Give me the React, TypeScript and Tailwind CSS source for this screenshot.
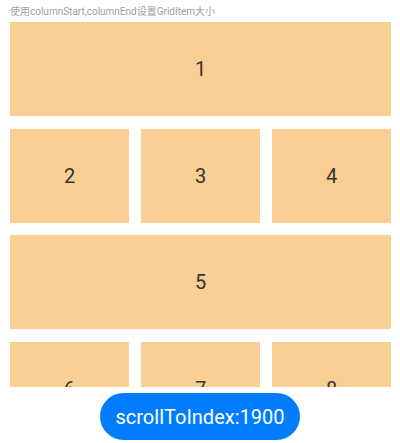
export default function App() {
  const items = [
    { n: 1, span: true },
    { n: 2 },
    { n: 3 },
    { n: 4 },
    { n: 5, span: true },
    { n: 6 },
    { n: 7 },
    { n: 8 },
    { n: 9, span: true },
  ];

  return (
    <div className="w-[400px] h-[443px] bg-white flex flex-col" style={{ fontFamily: "Roboto, 'Noto Sans CJK SC', sans-serif" }}>
      <div className="h-[22px] pl-[10px] flex items-center text-[10px] text-[#a0a0a0]">
        使用columnStart,columnEnd设置GridItem大小
      </div>
      <div className="h-[365px] overflow-hidden pl-[10px] pr-[9px]">
        <div className="grid grid-cols-3 gap-x-3 gap-y-[12.5px] auto-rows-[94px]">
          {items.map((it) => (
            <div
              key={it.n}
              className={
                (it.span ? "col-span-3 " : "") +
                "bg-[#F9CF93] flex items-center justify-center text-[20px] text-[#333333]"
              }
            >
              {it.n}
            </div>
          ))}
        </div>
      </div>
      <div className="flex justify-center mt-[6px]">
        <button className="w-[200px] h-[47px] rounded-full bg-[#007DFF] text-white text-[20px]">
          scrollToIndex:1900
        </button>
      </div>
    </div>
  );
}
